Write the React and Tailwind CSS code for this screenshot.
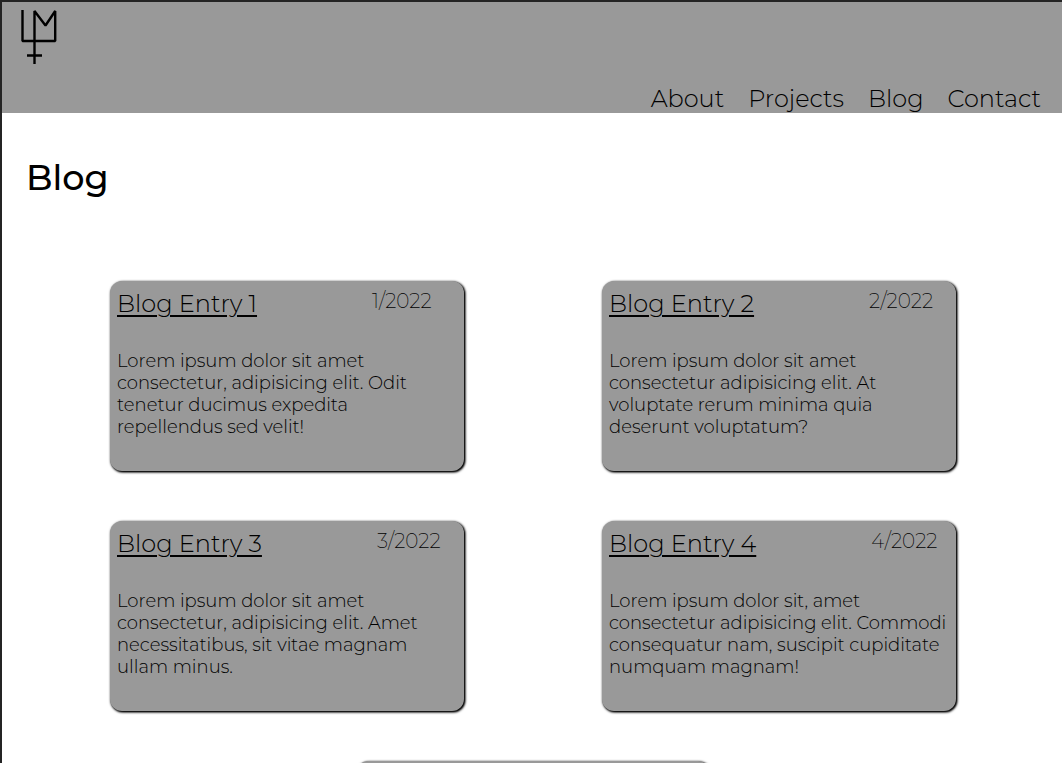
const links = ["About", "Projects", "Blog", "Contact"];

const entries = [
  { title: "Blog Entry 1", date: "1/2022", text: ["Lorem ipsum dolor sit amet", "consectetur, adipisicing elit. Odit", "tenetur ducimus expedita", "repellendus sed velit!"] },
  { title: "Blog Entry 2", date: "2/2022", text: ["Lorem ipsum dolor sit amet", "consectetur adipisicing elit. At", "voluptate rerum minima quia", "deserunt voluptatum?"] },
  { title: "Blog Entry 3", date: "3/2022", text: ["Lorem ipsum dolor sit amet", "consectetur, adipisicing elit. Amet", "necessitatibus, sit vitae magnam", "ullam minus."] },
  { title: "Blog Entry 4", date: "4/2022", text: ["Lorem ipsum dolor sit, amet", "consectetur adipisicing elit. Commodi", "consequatur nam, suscipit cupiditate", "numquam magnam!"] },
  { title: "Blog Entry 5", date: "5/2022", text: ["Lorem ipsum dolor sit amet", "consectetur adipisicing elit."] },
];

function Logo() {
  return (
    <svg width="38" height="56" viewBox="0 0 38 56" fill="none" stroke="#000" strokeWidth="2.4" role="img" aria-label="LM">
      <path d="M2.5 1v31H35.2V2L25.5 16.5 14.5 2V55M7 46.5H22" strokeMiterlimit="1" />
    </svg>
  );
}

function Entry({ title, date, text }) {
  return (
    <article className="min-h-[190px] w-[354px] max-w-full rounded-xl bg-[#999999] px-[7px] pt-2 pb-8 shadow-[1px_1px_3px_#000000,1px_1px_2px_#000000]">
      <div className="flex items-start gap-[115px]">
        <h2 className="text-2xl leading-[30px] font-light whitespace-nowrap">
          <a href="#" className="underline decoration-2 underline-offset-[3px]">{title}</a>
        </h2>
        <time className="text-xl leading-6 font-extralight">{date}</time>
      </div>
      <p className="mt-[31px] text-lg leading-[22px] font-light">
        {text.map((line) => (
          <span key={line} className="block whitespace-nowrap">{line}</span>
        ))}
      </p>
    </article>
  );
}

export default function App() {
  return (
    <div className="min-h-screen border-t-2 border-l-2 border-[#242424] bg-white font-['Montserrat','Inter',sans-serif] text-black">
      <header className="bg-[#999999] px-[18px] pt-[7px]">
        <a href="#" className="block w-fit"><Logo /></a>
        <nav className="mt-5 flex justify-end gap-6 pr-[3px] text-2xl leading-7 font-light">
          {links.map((link) => (
            <a key={link} href="#">{link}</a>
          ))}
        </nav>
      </header>
      <main>
        <h1 className="mt-10 ml-6 text-[35px] leading-[50px] font-medium">Blog</h1>
        <section className="mt-[78px] flex flex-wrap justify-center gap-x-[138px] gap-y-[50px] pb-12 pl-0.5">
          {entries.map((entry) => (
            <Entry key={entry.title} {...entry} />
          ))}
        </section>
      </main>
    </div>
  );
}
